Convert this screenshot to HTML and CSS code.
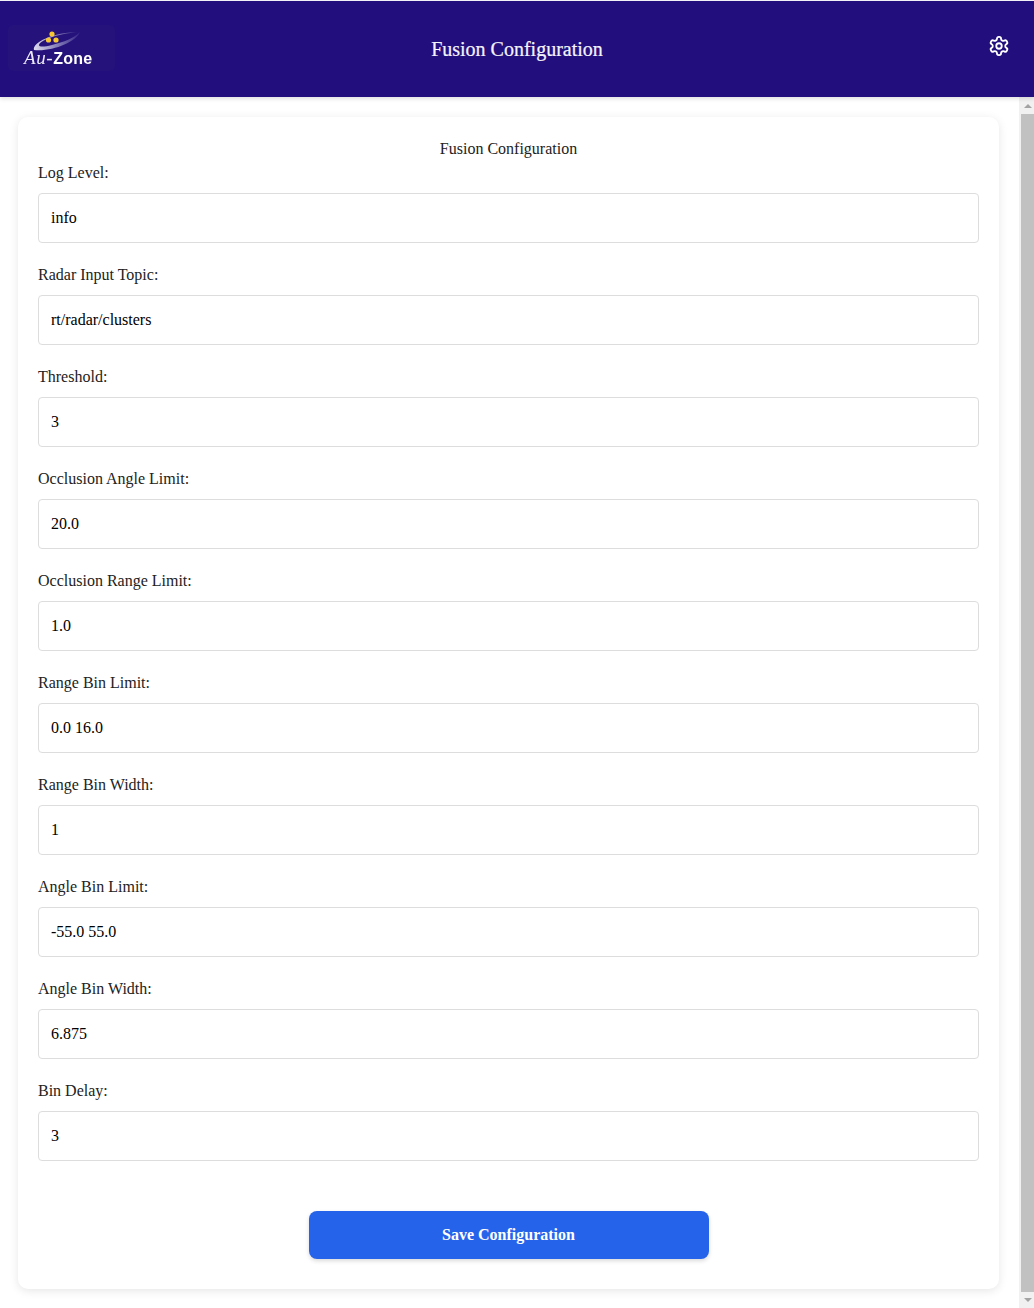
FILE: index.html
```html
<!DOCTYPE html>
<html lang="en">
<head>
<meta charset="utf-8">
<title>Fusion Configuration</title>
<link rel="stylesheet" href="styles.css">
</head>
<body>
<header class="header">
  <div class="logo">
    <svg class="logo-mark" viewBox="0 0 54 26" width="54" height="26" aria-hidden="true">
      <defs>
        <linearGradient id="swoosh" x1="0" x2="1" y1="0" y2="0">
          <stop offset="0" stop-color="#dcdaee"/>
          <stop offset="0.45" stop-color="#8f89bd"/>
          <stop offset="1" stop-color="#35248a"/>
        </linearGradient>
      </defs>
      <path d="M4 22C2 15 22 4 50 4C30 5 10 12 9 17C9 19 14 19 22 17C34 14 44 10 50 4C46 14 22 24 4 22Z" fill="url(#swoosh)"/>
      <circle cx="22" cy="6" r="2.600" fill="#f7c733"/>
      <circle cx="18.500" cy="12" r="2.600" fill="#f7c733"/>
      <circle cx="26" cy="12" r="2.600" fill="#f7c733"/>
    </svg>
    <div class="logo-text"><span class="logo-au">Au-</span><span class="logo-zone">Zone</span></div>
  </div>
  <h1 class="header-title">Fusion Configuration</h1>
  <svg class="gear" viewBox="0 0 24 24" width="22" height="22" fill="none" stroke="#fff" stroke-width="2" stroke-linecap="round" stroke-linejoin="round" aria-hidden="true">
    <path d="M12.22 2h-.44a2 2 0 0 0-2 2v.18a2 2 0 0 1-1 1.73l-.43.25a2 2 0 0 1-2 0l-.15-.08a2 2 0 0 0-2.73.73l-.22.38a2 2 0 0 0 .73 2.73l.15.1a2 2 0 0 1 1 1.72v.51a2 2 0 0 1-1 1.74l-.15.09a2 2 0 0 0-.73 2.73l.22.38a2 2 0 0 0 2.73.73l.15-.08a2 2 0 0 1 2 0l.43.25a2 2 0 0 1 1 1.73V20a2 2 0 0 0 2 2h.44a2 2 0 0 0 2-2v-.18a2 2 0 0 1 1-1.73l.43-.25a2 2 0 0 1 2 0l.15.08a2 2 0 0 0 2.73-.73l.22-.39a2 2 0 0 0-.73-2.73l-.15-.08a2 2 0 0 1-1-1.74v-.5a2 2 0 0 1 1-1.74l.15-.09a2 2 0 0 0 .73-2.73l-.22-.38a2 2 0 0 0-2.73-.73l-.15.08a2 2 0 0 1-2 0l-.43-.25a2 2 0 0 1-1-1.73V4a2 2 0 0 0-2-2z"/>
    <circle cx="12" cy="12" r="3"/>
  </svg>
</header>
<div class="body-row">
  <main class="main">
    <form class="card">
      <h2 class="card-title">Fusion Configuration</h2>
      <div class="field"><label class="label">Log Level:</label><input class="input" value="info"></div>
      <div class="field"><label class="label">Radar Input Topic:</label><input class="input" value="rt/radar/clusters"></div>
      <div class="field"><label class="label">Threshold:</label><input class="input" value="3"></div>
      <div class="field"><label class="label">Occlusion Angle Limit:</label><input class="input" value="20.0"></div>
      <div class="field"><label class="label">Occlusion Range Limit:</label><input class="input" value="1.0"></div>
      <div class="field"><label class="label">Range Bin Limit:</label><input class="input" value="0.0 16.0"></div>
      <div class="field"><label class="label">Range Bin Width:</label><input class="input" value="1"></div>
      <div class="field"><label class="label">Angle Bin Limit:</label><input class="input" value="-55.0 55.0"></div>
      <div class="field"><label class="label">Angle Bin Width:</label><input class="input" value="6.875"></div>
      <div class="field"><label class="label">Bin Delay:</label><input class="input" value="3"></div>
      <div class="actions"><button class="save" type="button">Save Configuration</button></div>
    </form>
  </main>
  <div class="scrollbar" aria-hidden="true">
    <span class="arrow arrow-up"></span>
    <span class="thumb"></span>
    <span class="arrow arrow-down"></span>
  </div>
</div>
</body>
</html>
```
FILE: styles.css
```css
* { box-sizing: border-box; }
html, body { margin: 0; height: 100%; overflow: hidden; }
body {
  display: flex;
  flex-direction: column;
  background: #fff;
  font-family: "Liberation Serif", "Times New Roman", serif;
  font-size: 16px;
  color: #222;
}
.header {
  position: relative;
  z-index: 1;
  flex: none;
  height: 97px;
  border-top: 1px solid #f2f1f7;
  background: #230e7e;
  box-shadow: 0 2px 4px rgba(0, 0, 0, 0.12);
  display: grid;
  grid-template-columns: 1fr auto 1fr;
  align-items: center;
}
.logo {
  width: 107px;
  height: 46px;
  margin: -3px 0 0 8px;
  border-radius: 5px;
  background: #25127a;
  display: flex;
  flex-direction: column;
  align-items: flex-start;
  color: #fff;
  padding: 3px 0 0 16px;
  filter: blur(0.35px);
}
.logo-mark { display: block; margin-left: 6px; margin-bottom: -5px; }
.logo-text { line-height: 18px; white-space: nowrap; display: flex; align-items: baseline; }
.logo-au { font-family: "Liberation Serif", serif; font-style: italic; font-size: 19px; letter-spacing: 0.6px; color: #ecebf5; }
.logo-zone { font-family: "Liberation Sans", sans-serif; font-weight: 700; font-size: 16px; letter-spacing: 0.2px; }
.header-title {
  margin: 0;
  text-align: center;
  font-size: 20px;
  font-weight: 400;
  color: #f4f3fa;
  -webkit-text-stroke: 0.2px #fff;
}
.gear { justify-self: end; margin: -6px 24px 0 0; }
.body-row { flex: 1; display: flex; min-height: 0; }
.main { flex: 1; min-width: 0; padding: 20px 20px 0 18px; background: #fff; }
.card {
  background: #fff;
  border-radius: 10px;
  box-shadow: 0 2px 10px rgba(0, 0, 0, 0.1);
  padding: 20px 20px 30px;
}
.card-title {
  margin: 0;
  font-size: 16px;
  font-weight: 400;
  line-height: 24px;
  text-align: center;
}
.field { margin-bottom: 20px; }
.label { display: block; line-height: 24px; margin-bottom: 8px; }
.input {
  display: block;
  width: 100%;
  height: 50px;
  padding: 0 12px;
  border: 1px solid #ddd;
  border-radius: 4px;
  background: #fff;
  color: #000;
  font: 16px "Liberation Serif", "Times New Roman", serif;
}
.actions { display: flex; justify-content: center; padding-top: 30px; }
.save {
  width: 400px;
  height: 48px;
  border: 0;
  border-radius: 8px;
  background: #2563eb;
  color: #fff;
  font: 700 16px "Liberation Serif", "Times New Roman", serif;
  box-shadow: 0 2px 4px rgba(0, 0, 0, 0.15);
}
.scrollbar {
  flex: none;
  width: 15px;
  background: #f1f1f1;
  display: flex;
  flex-direction: column;
  align-items: center;
  padding: 7px 0 6px 2px;
}
.arrow { flex: none; width: 0; height: 0; border-left: 4px solid transparent; border-right: 4px solid transparent; }
.arrow-up { border-bottom: 4px solid #a3a3a3; }
.arrow-down { border-top: 4px solid #a3a3a3; }
.thumb { flex: 1; width: 13px; background: #c1c1c1; margin: 6px 0; }
```
